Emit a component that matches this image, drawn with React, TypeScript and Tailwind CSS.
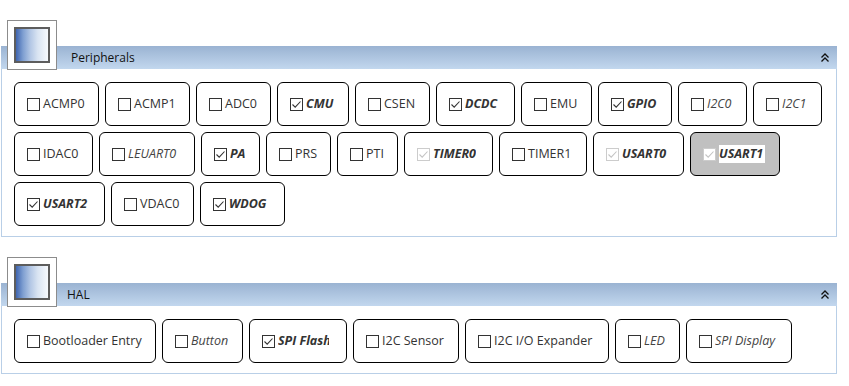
type Item = {
  label: string;
  w: number;
  checked?: boolean;
  disabled?: boolean;
  style?: "i" | "bi";
  selected?: boolean;
};

const peripherals: Item[][] = [
  [
    { label: "ACMP0", w: 85 },
    { label: "ACMP1", w: 85 },
    { label: "ADC0", w: 75 },
    { label: "CMU", w: 72, checked: true, style: "bi" },
    { label: "CSEN", w: 75 },
    { label: "DCDC", w: 79, checked: true, style: "bi" },
    { label: "EMU", w: 71 },
    { label: "GPIO", w: 74, checked: true, style: "bi" },
    { label: "I2C0", w: 69, style: "i" },
    { label: "I2C1", w: 69, style: "i" },
  ],
  [
    { label: "IDAC0", w: 79 },
    { label: "LEUART0", w: 96, style: "i" },
    { label: "PA", w: 59, checked: true, style: "bi" },
    { label: "PRS", w: 65 },
    { label: "PTI", w: 61 },
    { label: "TIMER0", w: 89, checked: true, disabled: true, style: "bi" },
    { label: "TIMER1", w: 88 },
    { label: "USART0", w: 91, checked: true, disabled: true, style: "bi" },
    { label: "USART1", w: 90, checked: true, disabled: true, style: "bi", selected: true },
  ],
  [
    { label: "USART2", w: 91, checked: true, style: "bi" },
    { label: "VDAC0", w: 83 },
    { label: "WDOG", w: 85, checked: true, style: "bi" },
  ],
];

const hal: Item[][] = [
  [
    { label: "Bootloader Entry", w: 142 },
    { label: "Button", w: 81, style: "i" },
    { label: "SPI Flash", w: 98, checked: true, style: "bi" },
    { label: "I2C Sensor", w: 106 },
    { label: "I2C I/O Expander", w: 144 },
    { label: "LED", w: 65, style: "i" },
    { label: "SPI Display", w: 106, style: "i" },
  ],
];

function Checkbox({ checked, disabled }: { checked?: boolean; disabled?: boolean }) {
  return (
    <span
      className={
        "flex h-[13px] w-[13px] shrink-0 items-center justify-center border bg-white " +
        (disabled ? "border-[#cccccc]" : "border-[#333333]")
      }
    >
      {checked ? (
        <svg width="11" height="11" viewBox="0 0 11 11">
          <path
            d="M1.5 5.5 L4.2 8.2 L9.5 2.5"
            fill="none"
            stroke={disabled ? "#c4c4c4" : "#333333"}
            strokeWidth="1.1"
          />
        </svg>
      ) : null}
    </span>
  );
}

function Label({ item }: { item: Item }) {
  if (!item.style) {
    return <span className="whitespace-nowrap text-[#333333]">{item.label}</span>;
  }
  // styled text gets clipped to the width of the plain label
  return (
    <span className={"relative overflow-hidden " + (item.selected ? "bg-white" : "")}>
      <span className="invisible whitespace-nowrap">{item.label}</span>
      <span
        className={
          "absolute inset-0 whitespace-nowrap italic " +
          (item.style === "bi" ? "font-bold text-[#333333]" : "text-[#444444]")
        }
      >
        {item.label}
      </span>
    </span>
  );
}

function Toggle({ item }: { item: Item }) {
  return (
    <div
      style={{ width: item.w }}
      className={
        "flex h-[44px] shrink-0 items-center gap-[3px] rounded-[6px] border border-black pl-[12px] text-[12.5px] " +
        (item.selected ? "bg-[#c0c0c0]" : "bg-white")
      }
    >
      <Checkbox checked={item.checked} disabled={item.disabled} />
      <Label item={item} />
    </div>
  );
}

function Section({
  title,
  rows,
  first,
  titlePad,
}: {
  title: string;
  rows: Item[][];
  first?: boolean;
  titlePad: string;
}) {
  return (
    <section className={first ? "" : "mt-[20px]"}>
      <div className="relative pt-[26px]">
        <div className="absolute left-[7px] top-0 flex h-[50px] w-[50px] items-center justify-center border border-[#8c8c8c] bg-white">
          <div className="h-[36px] w-[36px] border-2 border-[#5d5d5d] bg-[linear-gradient(to_right,#3f65b0,#7f9fd1_22%,#b3c7e5_45%,#d9e4f2_68%,#f6f9fd)]" />
        </div>
        <div
          className={
            "ml-[1px] flex h-[23px] w-[836px] items-center justify-between bg-[linear-gradient(to_bottom,#9ab3d2,#c2d7ee)] pr-[8px] " +
            titlePad
          }
        >
          <span className="text-[12px] text-[#111111]">{title}</span>
          <svg width="8" height="9" viewBox="0 0 8 9">
            <path d="M0.5 4.5 L4 1 L7.5 4.5 M0.5 8.5 L4 5 L7.5 8.5" fill="none" stroke="#111111" strokeWidth="1.3" />
          </svg>
        </div>
      </div>
      <div className="ml-[1px] flex w-[836px] flex-col gap-[6px] border-x border-b border-[#b9cfe7] pb-[10px] pl-[12px] pt-[13px]">
        {rows.map((row, r) => (
          <div key={r} className="flex gap-[6px]">
            {row.map((item) => (
              <Toggle key={item.label} item={item} />
            ))}
          </div>
        ))}
      </div>
    </section>
  );
}

export default function App() {
  return (
    <main className="h-[386px] w-[849px] overflow-hidden bg-white pt-[20px] font-['Open_Sans',sans-serif] text-[12px]">
      <Section title="Peripherals" rows={peripherals} first titlePad="pl-[70px]" />
      <Section title="HAL" rows={hal} titlePad="pl-[66px]" />
    </main>
  );
}
